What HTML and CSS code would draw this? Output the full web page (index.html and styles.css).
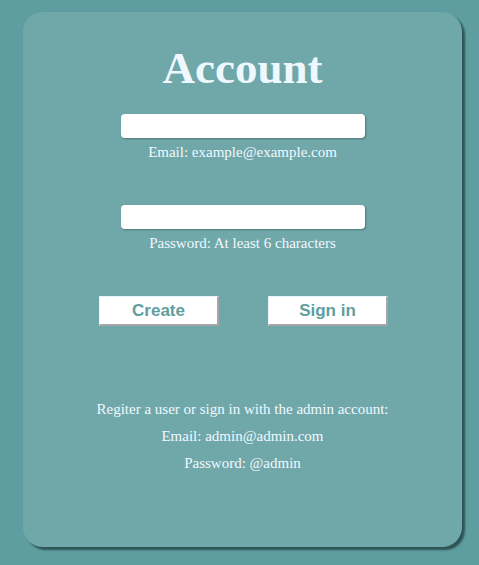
FILE: index.html
```html
<!DOCTYPE html>
<html>
<head>
<meta charset="utf-8">
<link rel="stylesheet" href="styles.css">
</head>
<body>
<div class="card">
  <h1 class="title">Account</h1>
  <div class="field">
    <input class="input" type="text">
    <label class="label">Email: example@example.com</label>
  </div>
  <div class="field field-gap">
    <input class="input" type="password">
    <label class="label">Password: At least 6 characters</label>
  </div>
  <div class="buttons">
    <button class="btn">Create</button>
    <button class="btn">Sign in</button>
  </div>
  <div class="info">
    <p class="info-line">Regiter a user or sign in with the admin account:</p>
    <p class="info-line">Email: admin@admin.com</p>
    <p class="info-line">Password: @admin</p>
  </div>
</div>
</body>
</html>
```
FILE: styles.css
```css
html, body {
  margin: 0;
  padding: 0;
}
body {
  background: #5f9ea0;
  font-family: "Liberation Serif", "Times New Roman", serif;
  color: #f0f8ff;
  padding: 12px 17px 18px 23px;
  height: 565px;
  box-sizing: border-box;
}
.card {
  width: 439px;
  height: 535px;
  box-sizing: border-box;
  background: #70a8aa;
  border-radius: 20px;
  box-shadow: 3px 3px 2px rgba(30, 60, 60, 0.75);
  padding-top: 30px;
  display: flex;
  flex-direction: column;
  align-items: center;
}
.title {
  margin: 0;
  font-size: 45px;
  font-weight: bold;
  line-height: 52px;
  color: #f0f8ff;
}
.field {
  margin-top: 20px;
  display: flex;
  flex-direction: column;
  align-items: center;
  gap: 5px;
}
.field-gap {
  margin-top: 44px;
}
.input {
  width: 244px;
  height: 24px;
  box-sizing: border-box;
  border: none;
  border-radius: 4px;
  background: #fff;
  box-shadow: 1px 1px 2px rgba(0, 0, 0, 0.3);
  margin: 0;
  padding: 0 4px;
}
.label {
  font-size: 15px;
  line-height: 18px;
}
.buttons {
  margin-top: 44px;
  display: flex;
  gap: 49px;
  padding-left: 2px;
}
.btn {
  width: 120px;
  height: 30px;
  box-sizing: border-box;
  background: #fff;
  border-top: 1px solid #e8f4ff;
  border-left: 1px solid #e8f4ff;
  border-right: 2px solid #a6a6a6;
  border-bottom: 2px solid #a6a6a6;
  color: #5f9ea0;
  font-family: "Liberation Sans", Arial, sans-serif;
  font-weight: bold;
  font-size: 17px;
  padding: 0;
}
.info {
  margin-top: 70px;
  text-align: center;
}
.info-line {
  margin: 0;
  font-size: 15px;
  line-height: 27px;
}
```
